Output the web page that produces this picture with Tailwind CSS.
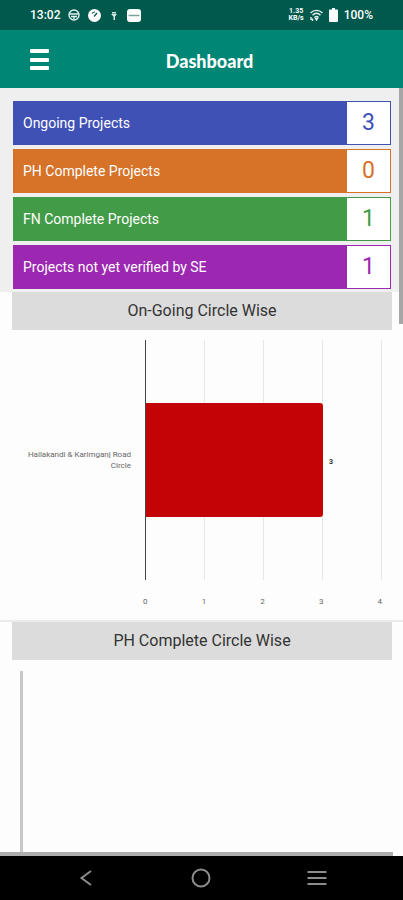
<!DOCTYPE html>
<html lang="en">
<head>
  <meta charset="UTF-8" />
  <meta name="viewport" content="width=device-width, initial-scale=1" />
  <title>Dashboard</title>
  <script src="https://cdn.jsdelivr.net/npm/@tailwindcss/browser@4"></script>
</head>
<body class="bg-white font-['Roboto',sans-serif] text-[#333]">
  <div class="flex flex-col h-screen overflow-hidden">
    <!-- Status bar -->
    <div class="flex items-center justify-between h-[30px] shrink-0 pl-[30px] pr-[30px] bg-[#00594c] text-white text-[12px] font-medium">
      <div class="flex items-center gap-2">
        <span>13:02</span>
        <svg class="w-3 h-3" viewBox="0 0 12 12" fill="none" stroke="#e5f3f0" stroke-width="1.4">
          <circle cx="6" cy="6" r="5" />
          <path d="M2 5h8M3 7.500h6M6 7.500V10" />
        </svg>
        <svg class="w-[13px] h-[13px]" viewBox="0 0 13 13">
          <circle cx="6.500" cy="6.500" r="6.500" fill="#fff" />
          <path d="M6 7.500l3-3.500M4 4.500a3.500 3.500 0 0 1 3-1.500" fill="none" stroke="#00594c" stroke-width="1.200" />
        </svg>
        <svg class="w-[6px] h-[9px] mx-[2px]" viewBox="0 0 6 9" fill="#d5e8e4">
          <path d="M1 1h4v1.500H1zM0 3h6L4 5.500V9H2.500V5.500z" />
        </svg>
        <svg class="w-[14px] h-[13px]" viewBox="0 0 14 13">
          <rect width="14" height="13" rx="3" fill="#fff" />
          <path d="M1.500 6.500h11" stroke="#7ba39c" stroke-width="1.500" />
        </svg>
      </div>
      <div class="flex items-center gap-[6px]">
        <div class="text-[7px] leading-[7px] font-bold text-center">1.35<br />KB/s</div>
        <svg class="w-[13px] h-[12px]" viewBox="0 0 13 12" fill="none" stroke="#e5f3f0" stroke-width="1.400">
          <path d="M.5 4C4 .5 9 .5 12.500 4M2.500 6.200c2.500-2.400 5.500-2.400 8 0M4.500 8.400c1.300-1.200 2.700-1.200 4 0" />
          <path d="M5.500 9.500h2l-1 1.500zM1 8v3M2.500 9.500V12" />
        </svg>
        <svg class="w-[9px] h-[14px]" viewBox="0 0 9 14" fill="#fff">
          <path d="M3 0h3v1.500h2a1 1 0 0 1 1 1V13a1 1 0 0 1-1 1H1a1 1 0 0 1-1-1V2.500a1 1 0 0 1 1-1h2z" />
        </svg>
        <span>100%</span>
      </div>
    </div>

    <!-- Header -->
    <header class="grid grid-cols-[1fr_auto_1fr] items-center h-[58px] shrink-0 px-[30px] bg-[#008674] text-white">
      <button aria-label="Open menu" class="w-5 h-[21px]">
        <svg class="w-5 h-[21px]" viewBox="0 0 20 21" fill="#fff">
          <rect x="0" y="0" width="19" height="4" rx="1" />
          <rect x="0" y="9" width="19" height="4" rx="1" />
          <rect x="0" y="17" width="19" height="4" rx="1" />
        </svg>
      </button>
      <h1 class="pl-4 pt-1 font-['Lato',sans-serif] text-[18px] font-black">Dashboard</h1>
    </header>

    <!-- Content -->
    <main class="relative flex-1 overflow-hidden bg-[#fdfdfd]">
      <ul class="flex flex-col gap-1 pt-[13px] pb-[3px] pl-[13px] pr-3 bg-[#efefef]">
        <li class="flex h-11 border border-[#3f51b5] bg-white">
          <span class="flex flex-1 items-center pl-[9px] bg-[#3f51b5] text-white text-[14px]">Ongoing Projects</span>
          <span class="flex w-[43px] items-center justify-center text-[23px] text-[#3f51b5]">3</span>
        </li>
        <li class="flex h-11 border border-[#d67328] bg-white">
          <span class="flex flex-1 items-center pl-[9px] bg-[#d67328] text-white text-[14px]">PH Complete Projects</span>
          <span class="flex w-[43px] items-center justify-center text-[23px] text-[#d67328]">0</span>
        </li>
        <li class="flex h-11 border border-[#429b46] bg-white">
          <span class="flex flex-1 items-center pl-[9px] bg-[#429b46] text-white text-[14px]">FN Complete Projects</span>
          <span class="flex w-[43px] items-center justify-center text-[23px] text-[#429b46]">1</span>
        </li>
        <li class="flex h-11 border border-[#9c27b0] bg-white">
          <span class="flex flex-1 items-center pl-[9px] bg-[#9c27b0] text-white text-[14px]">Projects not yet verified by SE</span>
          <span class="flex w-[43px] items-center justify-center text-[23px] text-[#9c27b0]">1</span>
        </li>
      </ul>

      <!-- On-going chart -->
      <section class="pl-3 pr-[11px] border-b-2 border-[#ebebeb]">
        <h2 class="flex h-[38px] items-center justify-center bg-[#dcdcdc] text-[16px]">On-Going Circle Wise</h2>
        <div class="flex pt-[10px] pr-[10px]">
          <div class="flex w-[133px] h-60 items-center justify-end pr-[14px] text-right text-[8px] leading-[11px] text-[#666]">Hailakandi &amp; Karimganj Road<br />Circle</div>
          <div class="relative flex flex-1 h-60 border-l border-[#444]">
            <div class="flex-1 border-r border-[#e6e6e6]"></div>
            <div class="flex-1 border-r border-[#e6e6e6]"></div>
            <div class="flex-1 border-r border-[#e6e6e6]"></div>
            <div class="flex-1 border-r border-[#e6e6e6]"></div>
            <div class="absolute inset-0 flex items-center">
              <div class="h-[114px] rounded-r-[3px] bg-[#c40404]" style="width: 75%"></div>
              <span class="pl-[6px] pt-1 text-[7px] font-bold">3</span>
            </div>
          </div>
        </div>
        <div class="flex justify-between pl-[131px] pr-[10px] pt-4 pb-3 text-[8px] leading-[12px] text-[#666]">
          <span>0</span>
          <span>1</span>
          <span>2</span>
          <span>3</span>
          <span>4</span>
        </div>
      </section>

      <!-- PH complete chart -->
      <section class="pl-3 pr-[11px]">
        <h2 class="flex h-[38px] items-center justify-center bg-[#dcdcdc] text-[16px]">PH Complete Circle Wise</h2>
        <div class="mt-[11px] ml-2 h-60 border-l-3 border-[#c8c8c8]"></div>
      </section>

      <!-- Scrollbars -->
      <div class="absolute top-0 right-0 w-1 h-[236px] bg-[#a6a6a6]"></div>
      <div class="absolute bottom-0 left-0 right-[10px] h-1 bg-[#adadad]"></div>
    </main>

    <!-- System navigation -->
    <nav class="flex items-center justify-around h-11 shrink-0 px-7 bg-black">
      <button aria-label="Back">
        <svg class="w-5 h-5" viewBox="0 0 20 20" fill="none" stroke="#8c8c8c" stroke-width="2">
          <path d="M15 3L5.500 10l9.500 7" />
        </svg>
      </button>
      <button aria-label="Home">
        <svg class="w-5 h-5" viewBox="0 0 20 20" fill="none" stroke="#8c8c8c" stroke-width="2">
          <circle cx="10" cy="10" r="8.500" />
        </svg>
      </button>
      <button aria-label="Recent apps">
        <svg class="w-5 h-5" viewBox="0 0 20 20" stroke="#8c8c8c" stroke-width="2">
          <path d="M.5 4h19M.5 10h19M.5 16h19" />
        </svg>
      </button>
    </nav>
  </div>
</body>
</html>
